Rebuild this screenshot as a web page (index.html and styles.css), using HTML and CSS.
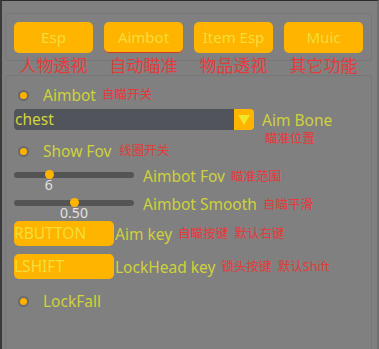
FILE: index.html
```html
<!DOCTYPE html>
<html>
<head>
<meta charset="utf-8">
<link rel="stylesheet" href="styles.css">
</head>
<body>
<div class="frame">
  <div class="tabs-panel">
    <div class="tabs">
      <div class="tab">Esp</div>
      <div class="tab active">Aimbot</div>
      <div class="tab">Item Esp</div>
      <div class="tab">Muic</div>
    </div>
  </div>
  <div class="tab-labels">
    <span>人物透视</span>
    <span>自动瞄准</span>
    <span>物品透视</span>
    <span>其它功能</span>
  </div>
  <div class="panel">
    <div class="row radio-row">
      <span class="radio"><span class="dot"></span></span>
      <span class="label">Aimbot</span>
      <span class="note">自瞄开关</span>
    </div>
    <div class="row combo-row">
      <div class="combo">chest</div>
      <div class="combo-btn"><svg width="12" height="10" viewBox="0 0 12 10"><polygon points="0,0 12,0 6,10" fill="#f3e62a"/></svg></div>
      <div class="combo-label">
        <span class="label">Aim Bone</span>
        <span class="note sub">瞄准位置</span>
      </div>
    </div>
    <div class="row radio-row fov">
      <span class="radio"><span class="dot"></span></span>
      <span class="label">Show Fov</span>
      <span class="note wide">线圈开关</span>
    </div>
    <div class="row slider-row">
      <div class="slider">
        <div class="track"><span class="thumb" style="left: 29%"></span></div>
        <div class="value"><span style="margin-left: 29%">6</span></div>
      </div>
      <span class="label">Aimbot Fov</span>
      <span class="note">瞄准范围</span>
    </div>
    <div class="row slider-row">
      <div class="slider">
        <div class="track"><span class="thumb" style="left: 50%"></span></div>
        <div class="value"><span style="margin-left: 50%">0.50</span></div>
      </div>
      <span class="label">Aimbot Smooth</span>
      <span class="note">自瞄平滑</span>
    </div>
    <div class="row key-row">
      <div class="keybox">RBUTTON</div>
      <span class="label tight">Aim key</span>
      <span class="note">自瞄按键&nbsp;&nbsp;默认右键</span>
    </div>
    <div class="row key-row second">
      <div class="keybox">LSHIFT</div>
      <span class="label tight">LockHead key</span>
      <span class="note">锁头按键&nbsp;&nbsp;默认Shift</span>
    </div>
    <div class="row radio-row last">
      <span class="radio"><span class="dot"></span></span>
      <span class="label">LockFall</span>
    </div>
  </div>
</div>
</body>
</html>
```
FILE: styles.css
```css
html, body {
  margin: 0;
  padding: 0;
  width: 379px;
  height: 349px;
  overflow: hidden;
  background: #7f7f7f;
}
.frame {
  box-sizing: border-box;
  width: 379px;
  height: 349px;
  background: #808080;
  border-top: 1px solid #2a2a2a;
  border-left: 2px solid #3a3a3a;
  border-right: 2px solid #707070;
  padding: 12px 5px 0 3px;
  font-family: "Noto Sans", "Noto Sans CJK SC", sans-serif;
  display: flex;
  flex-direction: column;
}
.tabs-panel {
  box-sizing: border-box;
  height: 48px;
  border: 1px solid #777777;
  border-radius: 3px;
  padding: 8px 0 0 8px;
}
.tabs {
  display: flex;
  gap: 11px;
}
.tab {
  position: relative;
  width: 79px;
  height: 31px;
  box-sizing: border-box;
  background: #ffb400;
  border-radius: 5px;
  color: #f4de3a;
  font-size: 15px;
  line-height: 31px;
  text-align: center;
}
.tab.active {
  border-bottom: 1px solid #d23a2a;
  line-height: 30px;
}
.tab-labels {
  display: flex;
  gap: 11px;
  padding-left: 9px;
  margin-top: -4px;
}
.tab-labels span {
  width: 79px;
  text-align: center;
  color: #e43c3c;
  font-size: 17px;
  line-height: 18px;
}
.panel {
  box-sizing: border-box;
  flex: 1;
  border: 1px solid #777777;
  border-bottom: none;
  border-radius: 3px 3px 0 0;
  padding: 9px 0 0 8px;
  display: flex;
  flex-direction: column;
}
.row {
  display: flex;
  align-items: center;
}
.label {
  color: #cfd23a;
  font-size: 15.5px;
  line-height: 20px;
}
.note {
  color: #e43a3a;
  font-size: 12.5px;
  line-height: 16px;
  margin-left: 6px;
}
.note.wide {
  margin-left: 8px;
}
.radio-row {
  height: 20px;
}
.radio {
  width: 11px;
  height: 11px;
  border-radius: 50%;
  background: #6a6a6a;
  display: flex;
  align-items: center;
  justify-content: center;
  margin-left: 4px;
  margin-right: 14px;
}
.dot {
  width: 7px;
  height: 7px;
  border-radius: 50%;
  background: #ffb000;
}
.combo-row {
  margin-top: 4px;
  align-items: flex-start;
  height: 21px;
}
.combo {
  box-sizing: border-box;
  width: 220px;
  height: 21px;
  background: #51545b;
  border-radius: 4px 0 0 4px;
  color: #d2d43c;
  font-size: 15.5px;
  line-height: 21px;
  padding-left: 1px;
}
.combo-btn {
  width: 20px;
  height: 21px;
  background: #ffb400;
  border-radius: 0 4px 4px 0;
  display: flex;
  align-items: center;
  justify-content: center;
}
.combo-label {
  display: flex;
  flex-direction: column;
  margin-left: 8px;
  margin-top: 2px;
}
.combo-label .label {
  line-height: 18px;
}
.combo-label .sub {
  margin-left: 3px;
  margin-top: 2px;
}
.fov {
  margin-top: 11px;
}
.slider-row {
  align-items: flex-start;
  height: 28px;
  margin-top: 4px;
}
.slider-row + .slider-row {
  margin-top: 0;
}
.slider {
  width: 120px;
  padding-top: 7px;
  margin-right: 9px;
}
.track {
  position: relative;
  height: 6px;
  border-radius: 3px;
  background: #545454;
}
.thumb {
  position: absolute;
  top: -2px;
  width: 9px;
  height: 9px;
  margin-left: -4px;
  border-radius: 50%;
  background: #ffb400;
}
.value {
  display: flex;
  color: #e2e2e2;
  font-size: 14px;
  line-height: 14px;
}
.value span {
  transform: translateX(-50%);
}
.slider-row .label {
  margin-top: 1px;
}
.slider-row .note {
  margin-top: 4px;
}
.key-row {
  height: 25px;
}
.key-row.second {
  margin-top: 8px;
}
.keybox {
  box-sizing: border-box;
  width: 100px;
  height: 25px;
  background: #ffb400;
  border-radius: 5px;
  color: #f4de3a;
  font-size: 15.5px;
  line-height: 25px;
}
.label.tight {
  margin-left: 1px;
}
.last {
  margin-top: 12px;
}
```
